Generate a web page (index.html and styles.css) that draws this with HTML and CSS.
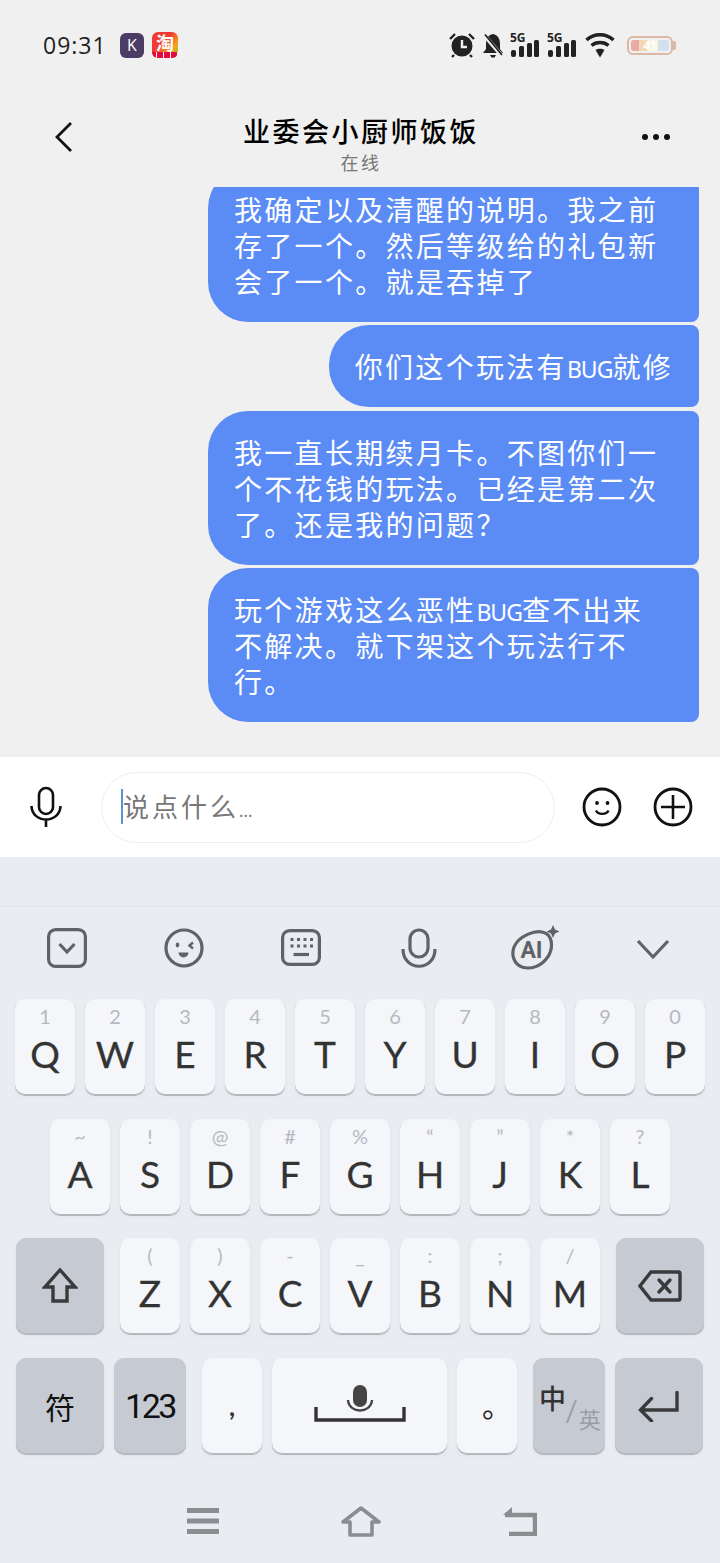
FILE: index.html
```html
<!DOCTYPE html>
<html lang="zh-CN">
<head>
  <meta charset="UTF-8" />
  <meta name="viewport" content="width=device-width, initial-scale=1.0"/>
  <title>业委会小厨师饭饭</title>
  <link rel="stylesheet" href="styles.css">
</head>
<body>
  <div class="status-bar">
    <span class="time">09:31</span>
    <span class="app-k">K</span>
    <span class="app-tao"><span class="tao-char">淘</span><span class="tao-strip"></span></span>
    <div class="status-right">
      <svg class="st-alarm" width="26" height="26" viewBox="0 0 26 26">
        <path d="M1 7 L6 2 M25 7 L20 2 M5 23 L3 25 M21 23 L23 25" stroke="#222" stroke-width="2.4" fill="none"/>
        <circle cx="13" cy="14" r="10.5" fill="#222"/>
        <path d="M13 8 V15 H18" stroke="#f0f0f0" stroke-width="2.4" fill="none"/>
      </svg>
      <svg class="st-bell" width="22" height="25" viewBox="0 0 22 25">
        <path d="M11 1 C6 2 4 6 4 11 V16 L1 20 H21 L18 16 V11 C18 6 16 2 11 1 Z" fill="#222"/>
        <path d="M8 22 H14 L12.5 24.5 H9.5 Z" fill="#222"/>
        <path d="M2 2 L20 23" stroke="#f0f0f0" stroke-width="4"/>
        <path d="M3 1.5 L20 22" stroke="#222" stroke-width="1.8"/>
      </svg>
      <svg class="st-sim" width="30" height="30" viewBox="0 0 30 30">
        <text x="0" y="15" class="sim-label">5G</text>
        <rect x="1" y="23" width="5" height="7" rx="2" fill="#222"/>
        <rect x="9" y="19" width="5" height="11" rx="1.5" fill="#222"/>
        <rect x="17" y="16" width="5" height="14" rx="1.5" fill="#222"/>
        <rect x="24" y="13" width="5" height="17" rx="1.5" fill="#222"/>
      </svg>
      <svg class="st-sim" width="30" height="30" viewBox="0 0 30 30">
        <text x="0" y="15" class="sim-label">5G</text>
        <rect x="1" y="23" width="5" height="7" rx="2" fill="#222"/>
        <rect x="9" y="19" width="5" height="11" rx="1.5" fill="#222"/>
        <rect x="17" y="16" width="5" height="14" rx="1.5" fill="#222"/>
        <rect x="24" y="13" width="5" height="17" rx="1.5" fill="#222"/>
      </svg>
      <svg class="st-wifi" width="30" height="26" viewBox="0 0 30 26">
        <path d="M1.5 8 C9 1 21 1 28.5 8" stroke="#222" stroke-width="3.4" fill="none"/>
        <path d="M6.5 13.5 C11 9.5 19 9.5 23.5 13.5" stroke="#222" stroke-width="3.4" fill="none"/>
        <path d="M10.5 18 L15 25.5 L19.5 18 C17 16.2 13 16.2 10.5 18 Z" fill="#222"/>
      </svg>
      <div class="battery"><div class="battery-fill">41</div></div>
    </div>
  </div>

  <div class="chat-header">
    <svg class="back" width="20" height="32" viewBox="0 0 20 32">
      <path d="M17 2 L3 16 L17 30" stroke="#111" stroke-width="2.8" fill="none"/>
    </svg>
    <div class="peer">
      <p class="peer-name">业委会小厨师饭饭</p>
      <p class="peer-state">在线</p>
    </div>
    <div class="more"><i></i><i></i><i></i></div>
  </div>

  <div class="messages">
    <div class="bubble wide">我确定以及清醒的说明。我之前<br>存了一个。然后等级给的礼包新<br>会了一个。就是吞掉了</div>
    <div class="bubble">你们这个玩法有<span class="latin">BUG</span>就修</div>
    <div class="bubble wide">我一直长期续月卡。不图你们一<br>个不花钱的玩法。已经是第二次<br>了。还是我的问题？</div>
    <div class="bubble wide">玩个游戏这么恶性<span class="latin">BUG</span>查不出来<br>不解决。就下架这个玩法行不<br>行。</div>
  </div>

  <div class="input-bar">
    <svg class="voice" width="34" height="42" viewBox="0 0 34 42">
      <rect x="10" y="2" width="14" height="26" rx="7" fill="none" stroke="#111" stroke-width="2.6"/>
      <path d="M2.5 20 C3 38 31 38 31.500 20 M17 33 V41" fill="none" stroke="#111" stroke-width="2.6"/>
    </svg>
    <div class="input-box"><span class="caret"></span><span class="placeholder">说点什么<span class="dots">...</span></span></div>
    <svg class="round-btn" width="40" height="40" viewBox="0 0 40 40">
      <circle cx="20" cy="20" r="18" fill="none" stroke="#111" stroke-width="2.8"/>
      <circle cx="15" cy="16" r="1.9" fill="#111"/>
      <circle cx="25.500" cy="16" r="1.9" fill="#111"/>
      <path d="M14 23.500 C16 28 24.500 28 26.500 23.500" fill="none" stroke="#111" stroke-width="2.4"/>
    </svg>
    <svg class="round-btn plus" width="40" height="40" viewBox="0 0 40 40">
      <circle cx="20" cy="20" r="18" fill="none" stroke="#111" stroke-width="2.8"/>
      <path d="M20 8 V32 M8 20 H32" fill="none" stroke="#111" stroke-width="2.6"/>
    </svg>
  </div>

  <div class="keyboard">
    <div class="kb-top"></div>
    <div class="kb-tools">
      <svg width="40" height="40" viewBox="0 0 40 40">
        <rect x="1.600" y="1.600" width="36.800" height="36.800" rx="7" class="tool"/>
        <path d="M12.500 16 L20 24 L27.500 16" class="tool"/>
      </svg>
      <svg width="40" height="40" viewBox="0 0 40 40">
        <circle cx="20" cy="20" r="18" class="tool"/>
        <ellipse cx="13.500" cy="17" rx="1.800" ry="2.400" class="tool-fill"/>
        <path d="M29 14.500 L25.500 17.500 L29 20.500" class="tool thin"/>
        <path d="M14.500 24.500 H24.500 C24 31 15 31 14.500 24.500 Z" class="tool-fill"/>
      </svg>
      <svg width="40" height="37" viewBox="0 0 40 37">
        <rect x="1.600" y="1.600" width="36.800" height="33.800" rx="7" class="tool"/>
        <path d="M9.500 10.500 H12.500 M16 10.500 H19 M22.500 10.500 H25.500 M29 10.500 H32 M9.500 17 H12.500 M16 17 H19 M22.500 17 H25.500 M29 17 H32" class="tool"/>
        <path d="M12.500 25.500 H28" class="tool"/>
      </svg>
      <svg width="36" height="40" viewBox="0 0 36 40">
        <rect x="9" y="2" width="18" height="27" rx="9" class="tool"/>
        <path d="M2 21 C2 44 34 44 34 21" class="tool"/>
      </svg>
      <svg width="50" height="46" viewBox="0 0 50 46">
        <path d="M36 9 C42 14 42 25 36 33 C30 41 20 45 11 42 C3 39 0 30 3 22 C7 12 26 2 36 9 Z" class="tool"/>
        <text x="20.500" y="33" class="ai-label">AI</text>
        <path d="M42 0 L44 4.500 L48.500 6.500 L44 8.500 L42 13 L40 8.500 L35.500 6.500 L40 4.500 Z" class="tool-fill"/>
      </svg>
      <svg width="36" height="24" viewBox="0 0 36 24">
        <path d="M3 5 L18 21 L33 5" class="tool"/>
      </svg>
    </div>

    <div class="kb-rows">
      <div class="kb-row row-top">
        <div class="key"><span class="hint">1</span><span class="cap">Q</span></div>
        <div class="key"><span class="hint">2</span><span class="cap">W</span></div>
        <div class="key"><span class="hint">3</span><span class="cap">E</span></div>
        <div class="key"><span class="hint">4</span><span class="cap">R</span></div>
        <div class="key"><span class="hint">5</span><span class="cap">T</span></div>
        <div class="key"><span class="hint">6</span><span class="cap">Y</span></div>
        <div class="key"><span class="hint">7</span><span class="cap">U</span></div>
        <div class="key"><span class="hint">8</span><span class="cap">I</span></div>
        <div class="key"><span class="hint">9</span><span class="cap">O</span></div>
        <div class="key"><span class="hint">0</span><span class="cap">P</span></div>
      </div>
      <div class="kb-row row-mid">
        <div class="key"><span class="hint">~</span><span class="cap">A</span></div>
        <div class="key"><span class="hint">!</span><span class="cap">S</span></div>
        <div class="key"><span class="hint">@</span><span class="cap">D</span></div>
        <div class="key"><span class="hint">#</span><span class="cap">F</span></div>
        <div class="key"><span class="hint">%</span><span class="cap">G</span></div>
        <div class="key"><span class="hint">“</span><span class="cap">H</span></div>
        <div class="key"><span class="hint">”</span><span class="cap">J</span></div>
        <div class="key"><span class="hint">*</span><span class="cap">K</span></div>
        <div class="key"><span class="hint">?</span><span class="cap">L</span></div>
      </div>
      <div class="kb-row row-low">
        <div class="key fn w-88 after-16">
          <svg width="36" height="38" viewBox="0 0 36 38">
            <path d="M18 3 L33 20 H25 V34 H11 V20 H3 Z" class="glyph"/>
          </svg>
        </div>
        <div class="key"><span class="hint">(</span><span class="cap">Z</span></div>
        <div class="key"><span class="hint">)</span><span class="cap">X</span></div>
        <div class="key"><span class="hint">-</span><span class="cap">C</span></div>
        <div class="key"><span class="hint">_</span><span class="cap">V</span></div>
        <div class="key"><span class="hint">:</span><span class="cap">B</span></div>
        <div class="key"><span class="hint">;</span><span class="cap">N</span></div>
        <div class="key"><span class="hint">/</span><span class="cap">M</span></div>
        <div class="key fn w-88 before-16">
          <svg width="44" height="32" viewBox="0 0 44 32">
            <path d="M13 2 H41 C42 2 42 3 42 4 V28 C42 29 42 30 41 30 H13 L2 16 Z" class="glyph"/>
            <path d="M21 10 L32 22 M32 10 L21 22" class="glyph"/>
          </svg>
        </div>
      </div>
      <div class="kb-row row-bottom">
        <div class="key fn w-88"><span class="sym">符</span></div>
        <div class="key fn w-72 after-16"><span class="nums">123</span></div>
        <div class="key"><span class="comma">,</span></div>
        <div class="key w-176">
          <svg class="space-mic" width="92" height="40" viewBox="0 0 92 40">
            <rect x="39" y="1" width="14" height="22" rx="7" fill="#444"/>
            <path d="M34 16 C35 30 57 30 58 16" fill="none" stroke="#444" stroke-width="2.4"/>
            <path d="M2 23 V36 H90 V23" fill="none" stroke="#333" stroke-width="3.4"/>
          </svg>
        </div>
        <div class="key"><span class="stop">。</span></div>
        <div class="key fn w-72 before-16 lang">
          <span class="lang-on">中</span><span class="lang-slash">/</span><span class="lang-off">英</span>
        </div>
        <div class="key fn w-88">
          <svg width="44" height="32" viewBox="0 0 44 32">
            <path d="M40 2.500 V20 H4 M14.500 8.500 L3.500 20 L14.500 31" class="glyph"/>
          </svg>
        </div>
      </div>
    </div>

    <div class="nav">
      <svg width="32" height="26" viewBox="0 0 32 26">
        <path d="M0 2.500 H32 M0 13 H32 M0 23.500 H32" stroke="#8b8d91" stroke-width="5" fill="none"/>
      </svg>
      <svg width="40" height="31" viewBox="0 0 40 31">
        <path d="M2 16 L20 2 L38 16 H31 V29 H9 V16 Z" stroke="#8b8d91" stroke-width="3.600" fill="none" stroke-linejoin="round"/>
      </svg>
      <svg width="34" height="30" viewBox="0 0 34 30">
        <path d="M2 9 H32 V28 H6" stroke="#8b8d91" stroke-width="4.400" fill="none"/>
        <path d="M0 9 L9 1 V9 Z" fill="#8b8d91"/>
      </svg>
    </div>
  </div>
</body>
</html>
```

FILE: styles.css
```css
* {
  box-sizing: border-box;
  margin: 0;
  padding: 0;
}

body {
  width: 720px;
  height: 1563px;
  overflow: hidden;
  display: flex;
  flex-direction: column;
  background: #f0f0f0;
  font-family: "Noto Sans CJK SC", "Noto Sans", sans-serif;
}

/* status bar */
.status-bar {
  height: 90px;
  flex: none;
  display: flex;
  align-items: center;
  padding: 0 47px 0 43px;
}

.time {
  width: 77px;
  font-family: "Open Sans", sans-serif;
  font-size: 23px;
  letter-spacing: 1px;
  color: #222;
}

.app-k {
  width: 24px;
  height: 25px;
  border-radius: 6px;
  background: #4b3c66;
  color: #fff;
  font-family: "Open Sans", sans-serif;
  font-size: 16px;
  line-height: 25px;
  text-align: center;
}

.app-tao {
  width: 26px;
  height: 26px;
  margin-left: 8px;
  border-radius: 6px;
  display: flex;
  flex-direction: column;
  align-items: center;
  background: linear-gradient(135deg, #ef3a35 40%, #f6a21e 70%, #8fc32e);
  color: #fff;
}

.tao-char {
  height: 20px;
  font-size: 18px;
  line-height: 20px;
  font-weight: bold;
}

.tao-strip {
  width: 100%;
  height: 6px;
  border-radius: 0 0 6px 6px;
  background: repeating-linear-gradient(90deg, #e5093f 0 4px, #fff 4px 5px, #e5093f 5px 7px);
}

.status-right {
  margin-left: auto;
  display: flex;
  align-items: center;
}

.st-bell { margin-left: 7px; }
.st-sim { margin-left: 6px; margin-top: -6px; }
.st-sim + .st-sim { margin-left: 7px; }
.st-wifi { margin-left: 8px; }

.sim-label {
  font-family: "Noto Sans", sans-serif;
  font-size: 12px;
  font-weight: bold;
  fill: #222;
}

.battery {
  width: 46px;
  height: 19px;
  margin-left: 12px;
  padding: 2px;
  border: 2px solid #d9b9a4;
  border-radius: 6px;
  position: relative;
}

.battery::after {
  content: "";
  position: absolute;
  right: -5px;
  top: 3px;
  width: 3px;
  height: 9px;
  border-radius: 0 2px 2px 0;
  background: #d9b9a4;
}

.battery-fill {
  height: 100%;
  border-radius: 3px;
  background: linear-gradient(90deg, #e8aaa5 0 22%, #f2d8b0 22% 45%, #fbf6e2 45% 70%, #d2e0ef 70%);
  color: #fff;
  font-family: "Open Sans", sans-serif;
  font-size: 12px;
  font-weight: bold;
  line-height: 11px;
  text-align: center;
}

/* chat header */
.chat-header {
  height: 97px;
  flex: none;
  display: flex;
  align-items: flex-start;
  justify-content: space-between;
  padding: 0 50px 0 54px;
}

.back { margin-top: 31px; }

.peer {
  text-align: center;
  margin: 22px 0 0 6px;
}

.peer-name {
  font-size: 27px;
  line-height: 38px;
  letter-spacing: 2.5px;
  font-weight: 500;
  color: #000;
}

.peer-state {
  font-size: 18px;
  line-height: 24px;
  letter-spacing: 2.5px;
  color: #777;
}

.more {
  display: flex;
  gap: 5px;
  margin-top: 44px;
}

.more i {
  width: 6px;
  height: 6px;
  border-radius: 50%;
  background: #111;
}

/* messages */
.messages {
  height: 570px;
  flex: none;
  overflow: hidden;
  display: flex;
  flex-direction: column;
  align-items: flex-end;
  justify-content: flex-end;
  gap: 3.5px;
  padding: 0 21px 35px;
}

.bubble {
  flex: none;
  padding: 23px 26px 23px;
  border-radius: 40px 8px 8px 40px;
  background: #5b8bf5;
  color: #fff;
  font-size: 28px;
  line-height: 36px;
  letter-spacing: 2.3px;
  white-space: nowrap;
}

.bubble.wide { width: 491px; }

.latin {
  font-family: "Noto Sans", sans-serif;
  font-size: 23px;
  line-height: 1;
  letter-spacing: -1px;
}

/* input bar */
.input-bar {
  height: 100px;
  flex: none;
  display: flex;
  align-items: center;
  background: #fff;
  padding: 0 26px 0 29px;
}

.input-box {
  width: 454px;
  height: 71px;
  margin-left: 38px;
  padding-left: 19px;
  display: flex;
  align-items: center;
  border: 1px solid #eeeeee;
  border-radius: 36px;
}

.caret {
  width: 2px;
  height: 35px;
  margin-top: -2px;
  background: #5b93d6;
}

.placeholder {
  font-size: 26px;
  letter-spacing: 3px;
  color: #777;
  margin-top: -4px;
}

.dots {
  font-size: 16px;
  letter-spacing: 0;
}

.round-btn { margin-left: 27px; }
.round-btn.plus { margin-left: 31px; }

/* keyboard */
.keyboard {
  flex: 1;
  background: #e9ecf1;
}

.kb-top {
  height: 50px;
  border-bottom: 1px solid #dfe2e7;
}

.kb-tools {
  height: 92px;
  display: grid;
  grid-template-columns: repeat(6, 1fr);
  align-items: center;
  justify-items: center;
  padding: 0 8px 11px;
}

.tool {
  fill: none;
  stroke: #5f6368;
  stroke-width: 3.2;
}

.tool.thin { stroke-width: 2.4; }
.tool-fill { fill: #5f6368; }

.ai-label {
  font-family: "Roboto", sans-serif;
  font-size: 23px;
  font-weight: bold;
  text-anchor: middle;
  fill: #5f6368;
}

.kb-rows {
  display: flex;
  flex-direction: column;
  gap: 23.7px;
}

.kb-row {
  display: flex;
  gap: 10px;
}

.row-top { padding-left: 15px; }
.row-mid { padding-left: 50px; }
.row-low { padding-left: 16px; }
.row-bottom { padding-left: 16px; }

.key {
  width: 60px;
  height: 96px;
  flex: none;
  display: flex;
  flex-direction: column;
  align-items: center;
  justify-content: center;
  border-radius: 10px;
  background: #f4f6fa;
  box-shadow: inset 0 -1px 0 #b4b7bd, 0 1px 0 #b4b7bd, 0 2px 5px rgba(0, 0, 0, 0.04);
}

.key.fn { background: #c6cbd3; }
.w-88 { width: 88px; }
.w-72 { width: 72px; }
.w-176 { width: 175px; }
.after-16 { margin-right: 6px; }
.before-16 { margin-left: 6px; }

.hint {
  height: 26px;
  margin-top: 4px;
  font-family: "Lato", sans-serif;
  font-size: 20px;
  line-height: 26px;
  color: #b6b9bf;
}

.cap {
  height: 44px;
  margin-top: 3px;
  margin-bottom: 19px;
  font-family: "Lato", sans-serif;
  font-size: 37px;
  line-height: 44px;
  color: #333;
  -webkit-text-stroke: 0.3px #333;
}

.glyph {
  fill: none;
  stroke: #3a3a3c;
  stroke-width: 3.4;
  stroke-linecap: round;
}

.sym {
  font-size: 30px;
  color: #111;
}

.nums {
  font-family: "Roboto", sans-serif;
  font-size: 34px;
  letter-spacing: -2.5px;
  color: #111;
}

.comma {
  font-family: "Lato", sans-serif;
  font-size: 26px;
  font-weight: bold;
  color: #333;
}

.stop {
  font-size: 30px;
  color: #222;
  padding-left: 20px;
  margin-top: -4px;
}

.space-mic { margin-top: -4px; }

.key.lang {
  flex-direction: row;
  align-items: flex-start;
  justify-content: flex-start;
  padding: 21px 0 0 6px;
}

.lang-on {
  font-size: 27px;
  line-height: 38px;
  font-weight: 500;
  color: #333;
}

.lang-slash {
  margin: 17px 0 0 -1px;
  font-family: "Lato", sans-serif;
  font-size: 28px;
  line-height: 28px;
  color: #9a9ea6;
}

.lang-off {
  margin: 24px 0 0 1px;
  font-size: 22px;
  line-height: 30px;
  color: #9a9ea6;
}

/* nav buttons */
.nav {
  display: flex;
  justify-content: center;
  align-items: center;
  gap: 122px;
  margin-top: 48px;
  padding-left: 3px;
  height: 38px;
}
```
